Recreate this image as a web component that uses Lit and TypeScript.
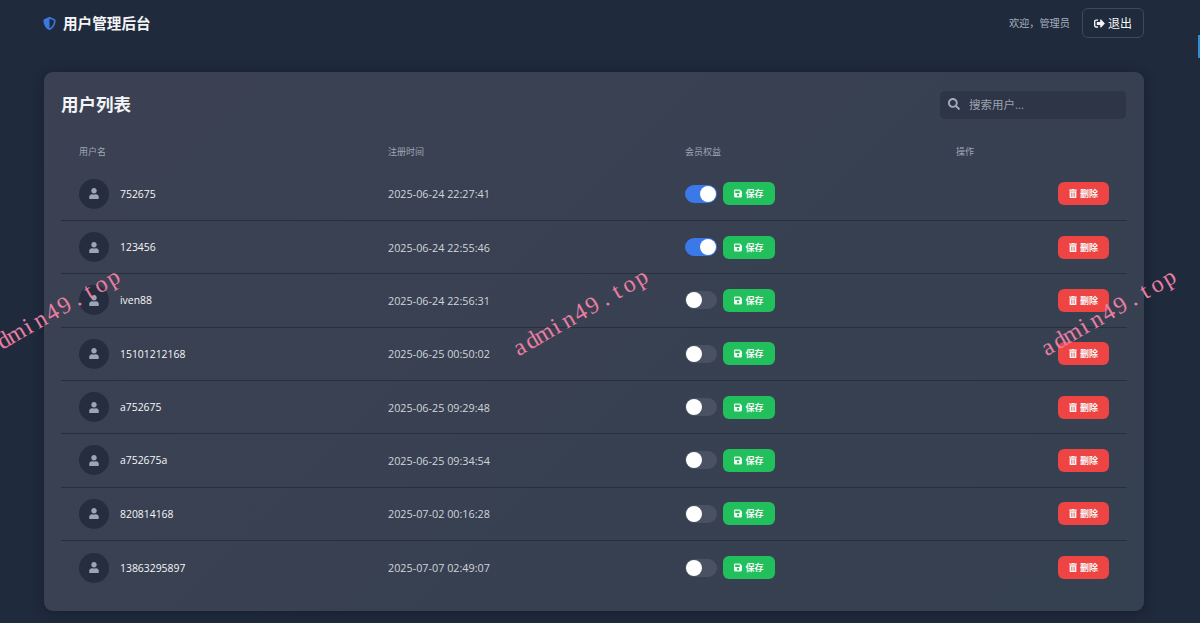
import { LitElement, html, css, svg } from "lit";
import { customElement } from "lit/decorators.js";

const P = {
  user: ["0 0 448 512", "M224 256c70.7 0 128-57.3 128-128S294.7 0 224 0 96 57.3 96 128s57.3 128 128 128zm89.6 32h-16.7c-22.2 10.2-46.9 16-72.9 16s-50.6-5.8-72.9-16h-16.7C60.2 288 0 348.2 0 422.4V464c0 26.5 21.5 48 48 48h352c26.5 0 48-21.5 48-48v-41.6c0-74.2-60.2-134.4-134.4-134.4z"],
  search: ["0 0 512 512", "M505 442.7L405.3 343c-4.5-4.5-10.6-7-17-7H372c27.6-35.3 44-79.7 44-128C416 93.1 322.9 0 208 0S0 93.1 0 208s93.1 208 208 208c48.3 0 92.7-16.4 128-44v16.3c0 6.4 2.5 12.5 7 17l99.7 99.7c9.4 9.4 24.6 9.4 33.9 0l28.3-28.3c9.4-9.4 9.4-24.6.1-34zM208 336c-70.7 0-128-57.2-128-128 0-70.7 57.2-128 128-128 70.7 0 128 57.2 128 128 0 70.7-57.2 128-128 128z"],
  trash: ["0 0 448 512", "M32 464a48 48 0 0 0 48 48h288a48 48 0 0 0 48-48V128H32zm272-256a16 16 0 0 1 32 0v224a16 16 0 0 1-32 0zm-96 0a16 16 0 0 1 32 0v224a16 16 0 0 1-32 0zm-96 0a16 16 0 0 1 32 0v224a16 16 0 0 1-32 0zM432 32H312l-9.4-18.7A24 24 0 0 0 281.1 0H166.8a23.72 23.72 0 0 0-21.4 13.3L136 32H16A16 16 0 0 0 0 48v32a16 16 0 0 0 16 16h416a16 16 0 0 0 16-16V48a16 16 0 0 0-16-16z"],
  save: ["0 0 448 512", "M433.941 129.941l-83.882-83.882A48 48 0 0 0 316.118 32H48C21.49 32 0 53.49 0 80v352c0 26.51 21.49 48 48 48h352c26.51 0 48-21.49 48-48V163.882a48 48 0 0 0-14.059-33.941zM224 416c-35.346 0-64-28.654-64-64 0-35.346 28.654-64 64-64s64 28.654 64 64c0 35.346-28.654 64-64 64zm96-304.52V212c0 6.627-5.373 12-12 12H76c-6.627 0-12-5.373-12-12V108c0-6.627 5.373-12 12-12h228.52c3.183 0 6.235 1.264 8.485 3.515l3.48 3.48A11.996 11.996 0 0 1 320 111.48z"],
  out: ["0 0 512 512", "M497 273L329 441c-15 15-41 4.5-41-17v-96H152c-13.3 0-24-10.7-24-24v-96c0-13.3 10.7-24 24-24h136V88c0-21.4 25.9-32 41-17l168 168c9.3 9.4 9.3 24.6 0 34zM192 436v-40c0-6.6-5.4-12-12-12H96c-17.7 0-32-14.3-32-32V160c0-17.7 14.3-32 32-32h84c6.6 0 12-5.4 12-12V76c0-6.6-5.4-12-12-12H96c-53 0-96 43-96 96v192c0 53 43 96 96 96h84c6.6 0 12-5.4 12-12z"],
  shield: ["0 0 512 512", "M466.5 83.7l-192-80a48.15 48.15 0 0 0-36.9 0l-192 80C27.7 91.1 16 108.6 16 128c0 198.5 114.5 335.7 221.5 380.3 11.8 4.9 25.1 4.9 36.9 0C360.1 472.6 496 349.3 496 128c0-19.4-11.7-36.9-29.5-44.3zM256.1 446.3l-.1-381 175.9 73.3c-3.3 151.4-82.1 261.1-175.8 307.7z"],
};

const icon = (k: keyof typeof P, cls: string) =>
  html`<svg class=${cls} viewBox=${P[k][0]} fill="currentColor">${svg`<path d=${P[k][1]}></path>`}</svg>`;

const USERS: [string, string, boolean][] = [
  ["752675", "2025-06-24 22:27:41", true],
  ["123456", "2025-06-24 22:55:46", true],
  ["iven88", "2025-06-24 22:56:31", false],
  ["15101212168", "2025-06-25 00:50:02", false],
  ["a752675", "2025-06-25 09:29:48", false],
  ["a752675a", "2025-06-25 09:34:54", false],
  ["820814168", "2025-07-02 00:16:28", false],
  ["13863295897", "2025-07-07 02:49:07", false],
];

@customElement("app-root")
export class AppRoot extends LitElement {
  static styles = css`
    :host {
      display: block;
      height: 623px;
      overflow: hidden;
      position: relative;
      background: #1f2a3c;
      font-family: "Open Sans", "Noto Sans CJK SC", sans-serif;
      color: #fff;
    }
    .top {
      display: flex;
      align-items: center;
      height: 46px;
      padding: 0 56px 0 43px;
    }
    .shield { width: 13px; height: 13px; color: #3b78e0; margin-right: 7px; }
    .brand { font-size: 14.6px; font-weight: 700; color: #f3f4f6; margin-bottom: 2px; }
    .spacer { flex: 1; }
    .hello { font-size: 10.2px; color: #a7afbc; margin: 0 12px 1px 0; }
    .logout {
      display: flex; align-items: center; gap: 3px;
      width: 62px; height: 30px; box-sizing: border-box;
      justify-content: center;
      border: 1px solid #3f4a5c; border-radius: 6px;
      font-size: 12px; color: #f3f4f6;
    }
    .i-out { width: 11px; height: 11px; }
    .card {
      margin: 26px 56px 0 44px;
      height: 539px;
      box-sizing: border-box;
      padding: 19px 18px 0 17px;
      background: linear-gradient(135deg, #3b4152, #354051);
      border-radius: 9px;
      box-shadow: 0 2px 12px rgba(15, 20, 32, 0.45);
    }
    .card-head { display: flex; align-items: center; justify-content: space-between; height: 28px; }
    h2 { margin: 0 0 2px; font-size: 17.5px; line-height: 26px; font-weight: 700; color: #f3f4f6; }
    .search {
      display: flex; align-items: center;
      width: 186px; height: 28px; box-sizing: border-box;
      padding: 0 0 2px 8px;
      background: #2d3546; border-radius: 5px;
      font-size: 11.5px; color: #9ca3af;
    }
    .i-search { width: 12px; height: 12px; margin-right: 9px; color: #a3abb8; }
    .row {
      display: grid;
      grid-template-columns: 309px 297px 271px 189px;
      align-items: center;
      height: 53.35px;
      margin-right: -1px;
      box-sizing: border-box;
      border-bottom: 1px solid #272e3d;
    }
    .row:last-child { border-bottom: 0; }
    .row > div { padding: 0 18px; }
    .thead {
      height: 48.5px; padding-top: 15.5px; border-bottom: 0;
      font-size: 9px; color: #a0a7b4;
    }
    .name-cell { display: flex; align-items: center; gap: 11px; font-size: 10.4px; font-weight: 500; color: #f6f7f9; }
    .avatar {
      width: 30px; height: 30px; border-radius: 50%;
      background: #252d3e; display: flex; align-items: center; justify-content: center;
    }
    .i-user { width: 10px; height: 11px; color: #9aa5b5; }
    .time { font-size: 10.8px; color: #d1d5db; }
    .perm { display: flex; align-items: center; gap: 6px; }
    .toggle {
      width: 32px; height: 18px; border-radius: 9px; background: #4a5161;
      display: flex; align-items: center; padding: 0 1px; box-sizing: border-box;
    }
    .toggle.on { background: #3b78e8; justify-content: flex-end; }
    .knob { width: 16px; height: 16px; border-radius: 50%; background: #fff; }
    .btn {
      display: flex; align-items: center; justify-content: center; gap: 3px;
      height: 23px; border-radius: 6px; font-size: 9px; font-weight: 700; color: #f4f7f5;
    }
    .save { width: 52px; background: #22bf5d; }
    .del { width: 51px; background: #ee4444; margin-left: auto; }
    .i-btn { width: 8px; height: 9px; }
    .mark {
      position: absolute;
      top: 298px;
      display: flex;
      font-family: "Liberation Serif", serif;
      font-size: 24px;
      line-height: 28px;
      color: #e97ea2;
      white-space: nowrap;
      transform: translate(-50%, 0) rotate(-30deg);
    }
    .mark span { display: flex; justify-content: center; width: 14px; }
    .tab {
      position: absolute; right: 0; top: 35px;
      width: 2px; height: 23px; background: #2f8fd6;
    }
  `;

  render() {
    return html`
      <div class="top">
        ${icon("shield", "shield")}
        <span class="brand">用户管理后台</span>
        <span class="spacer"></span>
        <span class="hello">欢迎，管理员</span>
        <div class="logout">${icon("out", "i-out")}<span>退出</span></div>
      </div>
      <div class="card">
        <div class="card-head">
          <h2>用户列表</h2>
          <div class="search">${icon("search", "i-search")}<span>搜索用户...</span></div>
        </div>
        <div class="row thead">
          <div>用户名</div><div>注册时间</div><div>会员权益</div><div>操作</div>
        </div>
        ${USERS.map(
          ([name, time, on]) => html`
            <div class="row">
              <div class="name-cell">
                <span class="avatar">${icon("user", "i-user")}</span><span>${name}</span>
              </div>
              <div class="time">${time}</div>
              <div class="perm">
                <span class="toggle ${on ? "on" : ""}"><span class="knob"></span></span>
                <span class="btn save">${icon("save", "i-btn")}保存</span>
              </div>
              <div>
                <span class="btn del">${icon("trash", "i-btn")}删除</span>
              </div>
            </div>
          `
        )}
      </div>
      <div class="tab"></div>
      ${[52, 580, 1108].map(
        (x) =>
          html`<div class="mark" style="left:${x}px">${[..."admin49.top"].map((c) => html`<span>${c}</span>`)}</div>`
      )}
    `;
  }
}
